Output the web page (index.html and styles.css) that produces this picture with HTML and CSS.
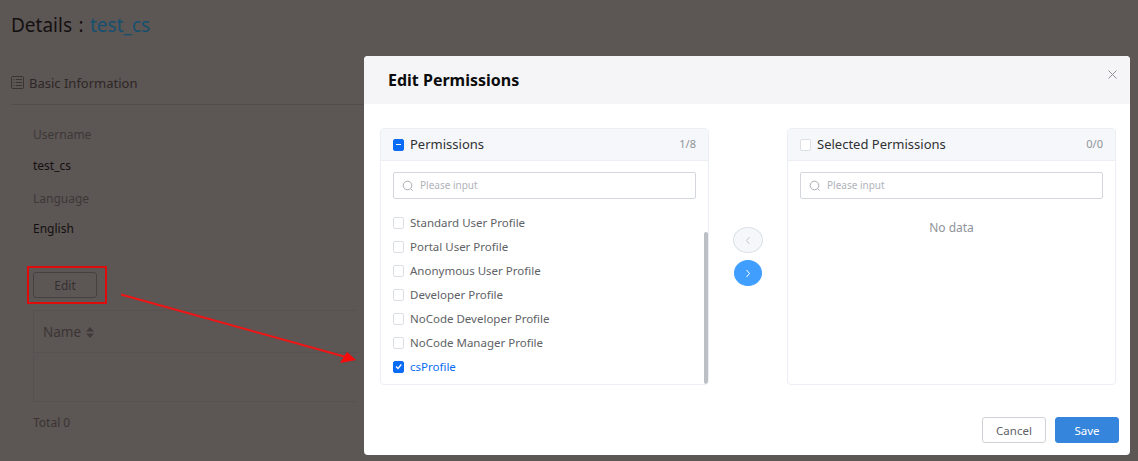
FILE: index.html
```html
<!DOCTYPE html>
<html lang="en">
<head>
<meta charset="utf-8">
<title>Edit Permissions</title>
<link rel="stylesheet" href="styles.css">
</head>
<body>
<main class="page">
  <h1 class="title">Details : <span class="title-link">test_cs</span></h1>
  <div class="section-head">
    <svg class="section-icon" width="14" height="14" viewBox="0 0 14 14" fill="none" stroke="#3a3331" stroke-width="1"><rect x="0.500" y="0.500" width="12" height="12" rx="1"/><path d="M2.500 3.500h1M5 3.500h6M2.500 6.500h1M5 6.500h6M2.500 9.500h1M5 9.500h6"/></svg>
    <span>Basic Information</span>
  </div>
  <div class="fields">
    <div class="label">Username</div>
    <div class="value">test_cs</div>
    <div class="label">Language</div>
    <div class="value">English</div>
  </div>
  <button class="edit-btn">Edit</button>
  <div class="table">
    <div class="table-head">Name
      <svg class="sort" width="8" height="11" viewBox="0 0 8 11" fill="#403b3a"><path d="M4 0l4 4.500H0zM4 11L0 6.500h8z"/></svg>
    </div>
    <div class="table-row"></div>
  </div>
  <div class="total">Total 0</div>
</main>

<section class="modal">
  <header class="modal-head">
    <h2 class="modal-title">Edit Permissions</h2>
    <svg class="close" width="9" height="9" viewBox="0 0 9 9" stroke="#8f9197" stroke-width="1"><path d="M.5.5l8 8M8.500.5l-8 8"/></svg>
  </header>
  <div class="modal-body">
    <div class="panel">
      <div class="panel-head">
        <span class="check indeterminate"></span>
        <span class="panel-title">Permissions</span>
        <span class="count">1/8</span>
      </div>
      <div class="search">
        <svg width="12" height="12" viewBox="0 0 12 12" fill="none" stroke="#a8abb2"><circle cx="5.500" cy="5.500" r="4.300"/><path d="M8.700 8.700l2 2"/></svg>
        <span class="txt">Please input</span>
      </div>
      <ul class="list">
        <li class="item"><span class="check"></span><span class="txt">Standard User Profile</span></li>
        <li class="item"><span class="check"></span><span class="txt">Portal User Profile</span></li>
        <li class="item"><span class="check"></span><span class="txt">Anonymous User Profile</span></li>
        <li class="item"><span class="check"></span><span class="txt">Developer Profile</span></li>
        <li class="item"><span class="check"></span><span class="txt">NoCode Developer Profile</span></li>
        <li class="item"><span class="check"></span><span class="txt">NoCode Manager Profile</span></li>
        <li class="item selected"><span class="check checked"><svg width="11" height="11" viewBox="0 0 11 11" fill="none" stroke="#fff" stroke-width="1.300"><path d="M3 5.500l2 2 3.300-4"/></svg></span><span class="txt">csProfile</span></li>
      </ul>
      <div class="scrollbar"></div>
    </div>
    <div class="arrows">
      <button class="round disabled"><svg width="6" height="9" viewBox="0 0 6 9" fill="none" stroke="#c0c4cc"><path d="M4.500 1L1.500 4.500l3 3.500"/></svg></button>
      <button class="round primary"><svg width="6" height="9" viewBox="0 0 6 9" fill="none" stroke="#fff"><path d="M1.500 1l3 3.500-3 3.500"/></svg></button>
    </div>
    <div class="panel">
      <div class="panel-head">
        <span class="check"></span>
        <span class="panel-title">Selected Permissions</span>
        <span class="count">0/0</span>
      </div>
      <div class="search">
        <svg width="12" height="12" viewBox="0 0 12 12" fill="none" stroke="#a8abb2"><circle cx="5.500" cy="5.500" r="4.300"/><path d="M8.700 8.700l2 2"/></svg>
        <span class="txt">Please input</span>
      </div>
      <div class="empty">No data</div>
    </div>
  </div>
  <footer class="modal-foot">
    <button class="btn">Cancel</button>
    <button class="btn save">Save</button>
  </footer>
</section>

<div class="red-box"></div>
<svg class="red-arrow" width="250" height="80" viewBox="0 0 250 80"><path d="M1 3.500L226 66" stroke="#f01414" stroke-width="2" fill="none"/><path d="M227 61L220 72L236 69z" fill="#f60a0a"/></svg>
</body>
</html>
```

FILE: styles.css
```css
* { box-sizing: border-box; }
html, body { margin: 0; height: 100%; }
body {
  width: 1138px;
  height: 461px;
  overflow: hidden;
  background: #5c5655;
  font-family: "Noto Sans", "Noto Sans CJK SC", sans-serif;
  position: relative;
  color: #2f2a29;
}
.page { padding: 11px 0 0 11px; }
.title { margin: 0; font-size: 19px; line-height: 28px; font-weight: 400; color: #141010; word-spacing: 1.500px; }
.title-link { color: #17506f; }
.section-head {
  display: flex;
  align-items: center;
  gap: 4px;
  margin-top: 28px;
  height: 38px;
  width: 360px;
  padding-bottom: 5px;
  font-size: 13px;
  color: #2e2725;
  border-bottom: 1px solid #524d4c;
}
.fields { padding: 20px 0 0 22px; font-size: 12px; }
.label { line-height: 20px; color: #3e3837; height: 32px; }
.value { line-height: 20px; color: #151010; height: 32px; margin-top: -1px; margin-bottom: 1px; }
.value:last-child { margin-top: -2px; margin-bottom: 2px; }
.edit-btn {
  display: block;
  margin: 21px 0 0 22px;
  width: 64px;
  height: 26px;
  background: transparent;
  border: 1px solid #464140;
  border-radius: 3px;
  font: inherit;
  font-size: 12px;
  color: #353030;
  padding: 0;
}
.table { margin: 12px 0 0 22px; width: 324px; border: 1px solid #575251; border-right: 0; }
.table-head {
  height: 42px;
  padding: 1px 0 0 9px;
  display: flex;
  align-items: center;
  gap: 5px;
  font-size: 13.500px;
  color: #3a3433;
  border-bottom: 1px solid #575251;
}
.table-row { height: 48px; }
.total { margin: 12px 0 0 22px; font-size: 12px; line-height: 18px; color: #3a3433; }

.modal {
  position: absolute;
  left: 364px;
  top: 56px;
  width: 766px;
  height: 399px;
  background: #fff;
  border-radius: 4px;
  overflow: hidden;
  display: flex;
  flex-direction: column;
}
.modal-head {
  height: 48px;
  background: #f5f5f8;
  padding: 0 13px 0 24px;
  display: flex;
  align-items: center;
  justify-content: space-between;
  flex: none;
}
.modal-title { margin: 0; font-size: 16px; font-weight: 700; color: #0c0c0c; }
.close { margin-top: -12px; }
.modal-body {
  display: flex;
  padding: 24px 14px 0 16px;
  flex: none;
  height: 281px;
}
.panel {
  position: relative;
  width: 329px;
  height: 257px;
  border: 1px solid #ebeef5;
  border-radius: 4px;
  overflow: hidden;
  flex: none;
}
.panel-head {
  height: 32px;
  background: #f5f7fa;
  border-bottom: 1px solid #ebeef5;
  display: flex;
  align-items: center;
  padding: 0 12px;
  font-size: 13px;
  color: #303133;
}
.panel-title { margin: -2px 0 0 6px; flex: 1; }
.count { font-size: 11px; color: #909399; margin-top: -3px; }
.txt { margin-top: -2px; }
.check {
  width: 11px;
  height: 12px;
  border: 1px solid #dcdfe6;
  border-radius: 2px;
  background: #fff;
  flex: none;
  position: relative;
  display: block;
}
.indeterminate { background: #0a6cf5; border-color: #0a6cf5; }
.indeterminate::after {
  content: "";
  position: absolute;
  left: 2px;
  right: 2px;
  top: 4px;
  height: 1.500px;
  background: #fff;
}
.checked { background: #0a6cf5; border-color: #0a6cf5; }
.checked svg { display: block; margin: -1px 0 0 -1px; }
.search {
  margin: 11px 12px 0;
  height: 27px;
  border: 1px solid #d3d6dc;
  border-radius: 2px;
  display: flex;
  align-items: center;
  gap: 6px;
  padding-left: 8px;
  font-size: 10px;
  color: #b0b3ba;
}
.list { list-style: none; margin: 12px 0 0; padding: 0 0 0 12px; }
.item {
  height: 24px;
  display: flex;
  align-items: center;
  gap: 6px;
  font-size: 11.500px;
  color: #606266;
}
.selected { color: #0a6cf5; }
.scrollbar {
  position: absolute;
  right: 0;
  top: 103px;
  bottom: 0;
  width: 4px;
  background: #bcbfc4;
  border-radius: 2px;
}
.arrows {
  width: 78px;
  flex: none;
  display: flex;
  flex-direction: column;
  align-items: center;
  padding-top: 99px;
  gap: 7px;
}
.round {
  width: 30px;
  height: 26px;
  border-radius: 50%;
  border: 1px solid #dcdfe6;
  padding: 0;
  display: flex;
  align-items: center;
  justify-content: center;
}
.disabled { background: #f5f7fa; }
.primary { background: #409eff; border-color: #409eff; width: 28px; }
.empty { margin-top: 20px; text-align: center; font-size: 12px; line-height: 18px; color: #909399; }
.modal-foot {
  flex: none;
  display: flex;
  justify-content: flex-end;
  gap: 9px;
  padding: 32px 11px 0 0;
}
.btn {
  width: 64px;
  height: 26px;
  border: 1px solid #cfd1d6;
  border-radius: 3px;
  background: #fff;
  font: inherit;
  font-size: 11.500px;
  color: #606266;
  padding: 0;
}
.save { background: #3585dc; border-color: #3585dc; color: #fff; }
.red-box {
  position: absolute;
  left: 27px;
  top: 266px;
  width: 80px;
  height: 38px;
  border: 2px solid #e00c0c;
}
.red-arrow { position: absolute; left: 120px; top: 291px; }
```
